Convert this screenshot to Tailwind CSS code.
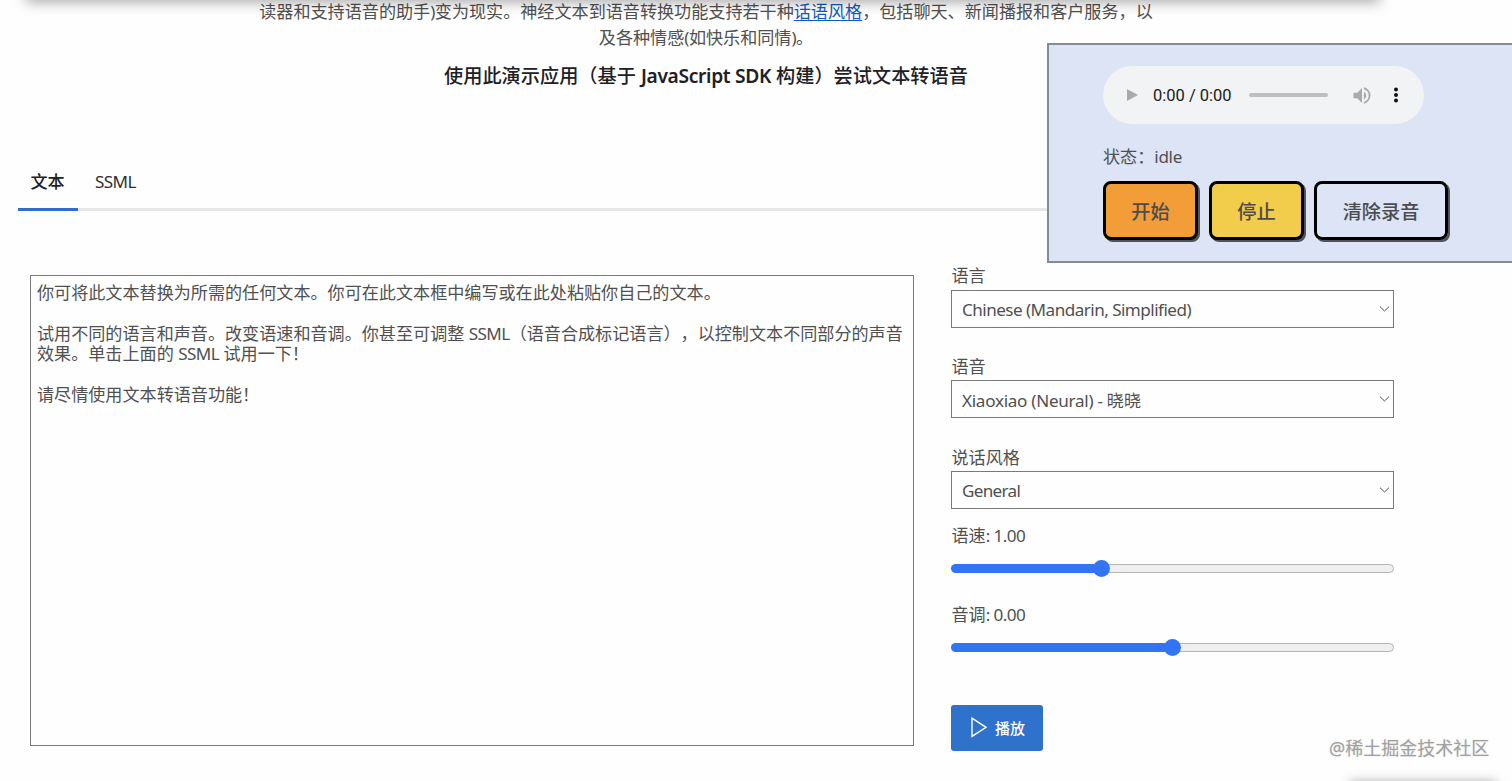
<!DOCTYPE html>
<html lang="zh-CN">
<head>
  <meta charset="UTF-8">
  <meta name="viewport" content="width=device-width, initial-scale=1.0">
  <title>文本转语音</title>
  <script src="https://cdn.jsdelivr.net/npm/@tailwindcss/browser@4"></script>
</head>
<body class="relative h-[781px] overflow-hidden bg-[#fefefe] font-['Noto_Sans','Noto_Sans_CJK_SC',sans-serif] text-[17.1px] text-[#505050]">
  <!-- Card edge above the fold -->
  <div class="absolute -top-5 left-[26px] h-5 w-[1354px] shadow-[0_2px_14px_rgba(0,0,0,0.35)]"></div>

  <main class="ml-[18px] w-[1376px]">
    <!-- Intro -->
    <section class="h-[156px] text-center whitespace-nowrap">
      <p class="-mt-px leading-[25.7px]">读器和支持语音的助手<span class="tracking-[-0.5px]">)</span>变为现实。神经文本到语音转换功能支持若干种<a href="#" class="text-[#0f5cbe] underline underline-offset-[2px]">话语风格</a>，包括聊天、新闻播报和客户服务，以<br>及各种情感<span class="tracking-[-0.5px]">(</span>如快乐和同情<span class="tracking-[-0.5px]">)</span>。</p>
      <h2 class="mt-[12px] text-[19.2px] leading-[27px] font-medium text-[#202024]">使用此演示应用（基于 <span class="font-semibold tracking-[-0.32px]">JavaScript SDK</span> 构建）尝试文本转语音</h2>
    </section>

    <!-- Tabs -->
    <nav class="flex h-[56px] border-b-[3px] border-[#e6e6e6] leading-[54px] text-[#303030]">
      <a href="#" class="h-[56px] w-[60px] border-b-[3px] border-[#2f6fc9] pr-px text-center font-medium text-[#202024]">文本</a>
      <a href="#" class="ml-[17px] tracking-[-0.6px]">SSML</a>
    </nav>

    <div class="flex">
      <div class="mt-[64px] ml-3 h-[471px] w-[884px] border border-[#7a7a7a] pt-[6.5px] pl-[6px] leading-[20.5px] whitespace-pre [text-spacing-trim:space-all]">你可将此文本替换为所需的任何文本。你可在此文本框中编写或在此处粘贴你自己的文本。

试用不同的语言和声音。改变语速和音调。你甚至可调整 <span class="tracking-[-0.6px]">SSML</span>（语音合成标记语言），以控制文本不同部分的声音
效果。单击上面的 <span class="tracking-[-0.6px]">SSML</span> 试用一下！

请尽情使用文本转语音功能！</div>

      <div class="mt-[53px] ml-[37px] w-[443px]">
        <div class="mb-[27px]">
          <label class="block pb-[1.6px] pl-[0.5px] leading-[24px]">语言</label>
          <div class="flex h-[38px] items-center justify-between border border-[#7a7a7a] pr-[3px] pl-[10px]">
            <span class="pt-[2px] tracking-[-0.53px]">Chinese (Mandarin, Simplified)</span>
            <svg class="h-[6px] w-[11px]" viewBox="0 0 11 6" fill="none" stroke="#505050"><path d="M1 .7 5.5 5 10 .7"/></svg>
          </div>
        </div>
        <div class="mb-[27px]">
          <label class="block pb-[1.6px] pl-[0.5px] leading-[24px]">语音</label>
          <div class="flex h-[38px] items-center justify-between border border-[#7a7a7a] pr-[3px] pl-[10px]">
            <span class="pt-[3px]"><span class="tracking-[-0.28px]">Xiaoxiao (Neural) - </span>晓晓</span>
            <svg class="h-[6px] w-[11px]" viewBox="0 0 11 6" fill="none" stroke="#505050"><path d="M1 .7 5.5 5 10 .7"/></svg>
          </div>
        </div>
        <div>
          <label class="block pb-[0.6px] pl-[0.5px] leading-[25px]">说话风格</label>
          <div class="flex h-[38px] items-center justify-between border border-[#7a7a7a] pr-[3px] pl-[10px]">
            <span class="pt-[2px] tracking-[-0.7px]">General</span>
            <svg class="h-[6px] w-[11px]" viewBox="0 0 11 6" fill="none" stroke="#505050"><path d="M1 .7 5.5 5 10 .7"/></svg>
          </div>
        </div>

        <!-- Sliders -->
        <div class="mt-[14px] h-[79px]">
          <label class="block pl-[0.5px] leading-[26px]">语速<span class="tracking-[-0.55px]">: 1.00</span></label>
          <div class="mt-[11px] flex h-[17px] items-center">
            <div class="h-[9px] w-[150px] rounded-l-full bg-[#3374f4]"></div>
            <div class="z-10 -mx-[8px] size-[17px] rounded-full bg-[#3374f4]"></div>
            <div class="h-[9px] flex-1 rounded-r-full border border-[#b5b5b5] bg-[#efefef]"></div>
          </div>
        </div>
        <div class="h-[103px]">
          <label class="block pl-[0.5px] leading-[26px]">音调<span class="tracking-[-0.55px]">: 0.00</span></label>
          <div class="mt-[11px] flex h-[17px] items-center">
            <div class="h-[9px] w-[221px] rounded-l-full bg-[#3374f4]"></div>
            <div class="z-10 -mx-[8px] size-[17px] rounded-full bg-[#3374f4]"></div>
            <div class="h-[9px] flex-1 rounded-r-full border border-[#b5b5b5] bg-[#efefef]"></div>
          </div>
        </div>

        <button class="flex h-[46px] w-[92px] items-center rounded-[3px] bg-[#2f72cb] pl-[20px] text-[15px] font-medium text-white">
          <svg class="mr-[8px] h-[21px] w-[16px]" viewBox="0 0 16 21" fill="none" stroke="currentColor" stroke-width="1.4"><path d="M1 1.2v18.2L15 10.3z"/></svg>
          播放
        </button>
      </div>
    </div>
  </main>

  <!-- Recorder panel -->
  <aside class="absolute top-[43px] left-[1047px] h-[220px] w-[480px] border-2 border-[#858b92] bg-[#dce4f5] pt-[21px] pl-[54px]">
    <div class="flex h-[58px] w-[321px] items-center rounded-full bg-[#f1f3f4]">
      <svg class="ml-[24px] h-[12px] w-[11px]" viewBox="0 0 11 12" fill="#a8abac"><path d="M0 0v12l11-6z"/></svg>
      <span class="ml-[15px] w-[79px] pt-[2px] font-[Roboto,sans-serif] text-[16.5px] whitespace-nowrap text-[#202020]">0:00 / 0:00</span>
      <span class="ml-[17px] h-[4px] w-[79px] rounded-full bg-[#bdbfc0]"></span>
      <svg class="ml-[25px] h-[17px] w-[18px]" viewBox="3 3 18 18" fill="#a8abac"><path d="M3 9v6h4l5 5V4L7 9H3zm13.5 3A4.5 4.5 0 0 0 14 7.97v8.05A4.5 4.5 0 0 0 16.5 12zM14 3.23v2.06a7 7 0 0 1 0 13.42v2.06a9 9 0 0 0 0-17.54z"/></svg>
      <svg class="ml-[22px] h-[16px] w-[6px]" viewBox="0 0 6 16" fill="#111"><circle cx="3" cy="2.5" r="2"/><circle cx="3" cy="8" r="2"/><circle cx="3" cy="13.5" r="2"/></svg>
    </div>
    <p class="mt-[20px] leading-[26px]">状态：<span class="tracking-[-0.3px]">idle</span></p>
    <div class="mt-[11px] flex gap-[10px] text-[19.2px] font-medium text-[#4b4b50]">
      <button class="h-[59px] w-[95px] rounded-[8px] border-[3px] border-black bg-[#f29d38] pt-[3px] shadow-[2px_2px_0_#50535c]">开始</button>
      <button class="ml-[1px] h-[59px] w-[95px] rounded-[8px] border-[3px] border-black bg-[#f2cc4b] pt-[3px] shadow-[2px_2px_0_#50535c]">停止</button>
      <button class="h-[59px] w-[134px] rounded-[8px] border-[3px] border-black pt-[3px] shadow-[2px_2px_0_#50535c]">清除录音</button>
    </div>
  </aside>

  <!-- Watermark -->
  <div class="absolute top-[735px] left-[1329px] text-[18px] leading-[26px] whitespace-nowrap text-[#a0a0a0] [text-shadow:0_0_2px_#ddd]">@稀土掘金技术社区</div>
  <div class="absolute top-[782px] left-[1350px] h-5 w-[146px] shadow-[0_0_12px_rgba(0,0,0,0.35)]"></div>
</body>
</html>
